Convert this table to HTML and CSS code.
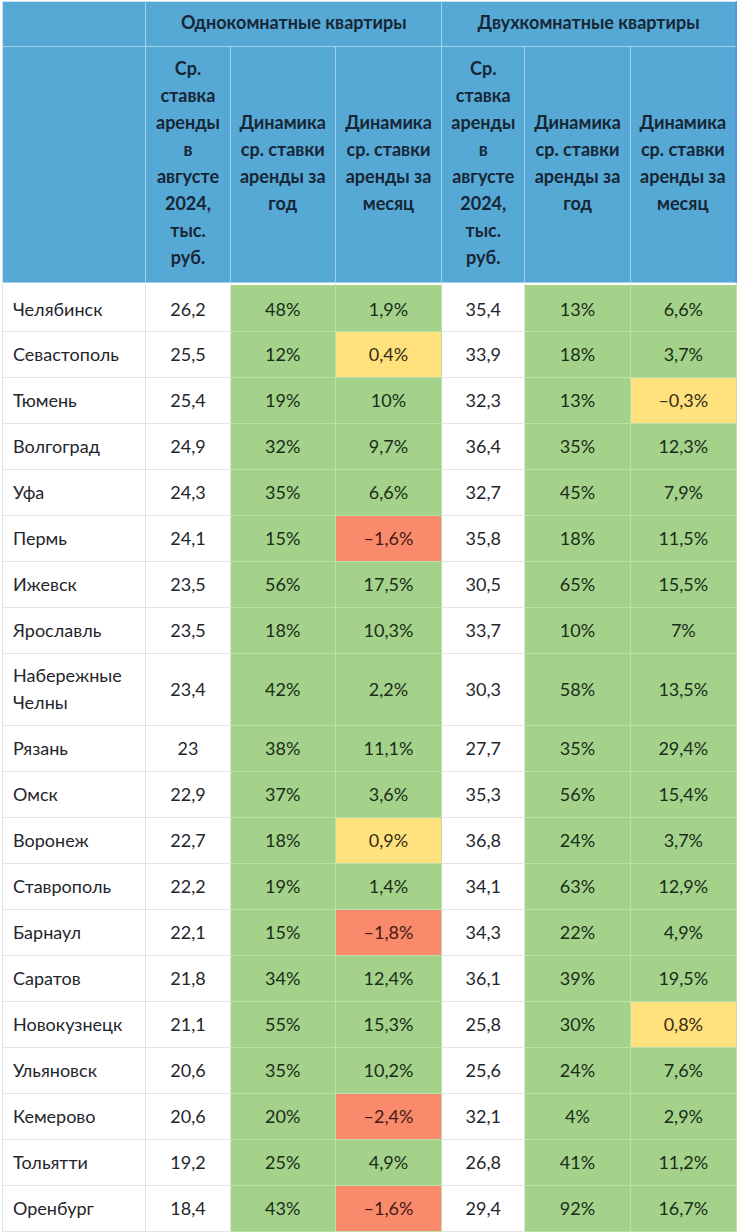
FILE: index.html
```html
<!DOCTYPE html>
<html lang="ru">
<head>
<meta charset="utf-8">
<title>Ставки аренды</title>
<link rel="stylesheet" href="styles.css">
</head>
<body>
<table class="rent">
  <colgroup>
    <col class="c-city"><col class="c-avg"><col class="c-dyn"><col class="c-dyn2">
    <col class="c-avg2"><col class="c-dyn"><col class="c-dyn2">
  </colgroup>
  <thead>
    <tr class="h1">
      <th class="first"></th>
      <th colspan="3">Однокомнатные квартиры</th>
      <th colspan="3" class="last">Двухкомнатные квартиры</th>
    </tr>
    <tr class="h2">
      <th class="first"></th>
      <th>Ср. ставка аренды в августе 2024, тыс. руб.</th>
      <th>Динамика ср. ставки аренды за год</th>
      <th>Динамика ср. ставки аренды за месяц</th>
      <th>Ср. ставка аренды в августе 2024, тыс. руб.</th>
      <th>Динамика ср. ставки аренды за год</th>
      <th class="last">Динамика ср. ставки аренды за месяц</th>
    </tr>
  </thead>
  <tbody>
    <tr class="top"><td class="city">Челябинск</td><td class="num">26,2</td><td class="g">48%</td><td class="g">1,9%</td><td class="num">35,4</td><td class="g">13%</td><td class="g">6,6%</td></tr>
    <tr><td class="city">Севастополь</td><td class="num">25,5</td><td class="g">12%</td><td class="y">0,4%</td><td class="num">33,9</td><td class="g">18%</td><td class="g">3,7%</td></tr>
    <tr><td class="city">Тюмень</td><td class="num">25,4</td><td class="g">19%</td><td class="g">10%</td><td class="num">32,3</td><td class="g">13%</td><td class="y">–0,3%</td></tr>
    <tr><td class="city">Волгоград</td><td class="num">24,9</td><td class="g">32%</td><td class="g">9,7%</td><td class="num">36,4</td><td class="g">35%</td><td class="g">12,3%</td></tr>
    <tr><td class="city">Уфа</td><td class="num">24,3</td><td class="g">35%</td><td class="g">6,6%</td><td class="num">32,7</td><td class="g">45%</td><td class="g">7,9%</td></tr>
    <tr><td class="city">Пермь</td><td class="num">24,1</td><td class="g">15%</td><td class="r">–1,6%</td><td class="num">35,8</td><td class="g">18%</td><td class="g">11,5%</td></tr>
    <tr><td class="city">Ижевск</td><td class="num">23,5</td><td class="g">56%</td><td class="g">17,5%</td><td class="num">30,5</td><td class="g">65%</td><td class="g">15,5%</td></tr>
    <tr><td class="city">Ярославль</td><td class="num">23,5</td><td class="g">18%</td><td class="g">10,3%</td><td class="num">33,7</td><td class="g">10%</td><td class="g">7%</td></tr>
    <tr><td class="city two">Набережные Челны</td><td class="num">23,4</td><td class="g">42%</td><td class="g">2,2%</td><td class="num">30,3</td><td class="g">58%</td><td class="g">13,5%</td></tr>
    <tr><td class="city">Рязань</td><td class="num">23</td><td class="g">38%</td><td class="g">11,1%</td><td class="num">27,7</td><td class="g">35%</td><td class="g">29,4%</td></tr>
    <tr><td class="city">Омск</td><td class="num">22,9</td><td class="g">37%</td><td class="g">3,6%</td><td class="num">35,3</td><td class="g">56%</td><td class="g">15,4%</td></tr>
    <tr><td class="city">Воронеж</td><td class="num">22,7</td><td class="g">18%</td><td class="y">0,9%</td><td class="num">36,8</td><td class="g">24%</td><td class="g">3,7%</td></tr>
    <tr><td class="city">Ставрополь</td><td class="num">22,2</td><td class="g">19%</td><td class="g">1,4%</td><td class="num">34,1</td><td class="g">63%</td><td class="g">12,9%</td></tr>
    <tr><td class="city">Барнаул</td><td class="num">22,1</td><td class="g">15%</td><td class="r">–1,8%</td><td class="num">34,3</td><td class="g">22%</td><td class="g">4,9%</td></tr>
    <tr><td class="city">Саратов</td><td class="num">21,8</td><td class="g">34%</td><td class="g">12,4%</td><td class="num">36,1</td><td class="g">39%</td><td class="g">19,5%</td></tr>
    <tr><td class="city">Новокузнецк</td><td class="num">21,1</td><td class="g">55%</td><td class="g">15,3%</td><td class="num">25,8</td><td class="g">30%</td><td class="y">0,8%</td></tr>
    <tr><td class="city">Ульяновск</td><td class="num">20,6</td><td class="g">35%</td><td class="g">10,2%</td><td class="num">25,6</td><td class="g">24%</td><td class="g">7,6%</td></tr>
    <tr><td class="city">Кемерово</td><td class="num">20,6</td><td class="g">20%</td><td class="r">–2,4%</td><td class="num">32,1</td><td class="g">4%</td><td class="g">2,9%</td></tr>
    <tr><td class="city">Тольятти</td><td class="num">19,2</td><td class="g">25%</td><td class="g">4,9%</td><td class="num">26,8</td><td class="g">41%</td><td class="g">11,2%</td></tr>
    <tr><td class="city">Оренбург</td><td class="num">18,4</td><td class="g">43%</td><td class="r">–1,6%</td><td class="num">29,4</td><td class="g">92%</td><td class="g">16,7%</td></tr>
  </tbody>
</table>
</body>
</html>
```

FILE: styles.css
```css
html, body {
  margin: 0;
  padding: 0;
  background: #ffffff;
}

body {
  font-family: Lato, "Open Sans", "Liberation Sans", sans-serif;
  font-size: 18px;
  color: #1f262c;
}

.rent {
  margin: 1px 0 0 2px;
  width: 735px;
  table-layout: fixed;
  border-collapse: separate;
  border-spacing: 0;
}

.c-city { width: 144px; }
.c-avg { width: 84px; }
.c-dyn { width: 105px; }
.c-dyn2 { width: 106px; }
.c-avg2 { width: 83px; }

.rent th {
  background: #56a9d5;
  color: #172636;
  font-weight: 700;
  line-height: 27px;
  text-align: center;
  vertical-align: middle;
  border-right: 1px solid #a2d2ec;
  border-bottom: 1px solid #a2d2ec;
  padding: 0 5px;
}

.rent th.first {
  border-left: 1px solid #c9e4f3;
}

.rent th.last {
  border-right: 2px solid #5b8fe0;
}

.rent thead tr.h1 th {
  padding-top: 7px;
  padding-bottom: 10px;
  border-top: 1px solid #c9e4f3;
}

.rent thead tr.h2 th {
  padding-top: 8px;
  padding-bottom: 11px;
}

.rent td {
  line-height: 27px;
  padding: 9px 6px;
  text-align: center;
  vertical-align: middle;
  border-right: 1px solid #e4e4e4;
  border-bottom: 1px solid #e4e4e4;
}

.rent td.city {
  text-align: left;
  padding-left: 10px;
  border-left: 1px solid #e4e4e4;
}

.rent td.two {
  padding-top: 8px;
}

.rent tr.top td {
  border-top: 2px solid #ffffff;
  padding-top: 11px;
  padding-bottom: 8px;
}

.rent td.num {
  background: #ffffff;
}

.rent td.g {
  background: #a4d28b;
  color: #1a2d19;
  border-right-color: #bde0aa;
  border-bottom-color: #bde0aa;
}

.rent td.y {
  background: #ffe27e;
  color: #352c14;
  border-right-color: #bde0aa;
  border-bottom-color: #bde0aa;
}

.rent td.r {
  background: #f98a6c;
  color: #451a12;
  border-right-color: #bde0aa;
  border-bottom-color: #bde0aa;
}
```
